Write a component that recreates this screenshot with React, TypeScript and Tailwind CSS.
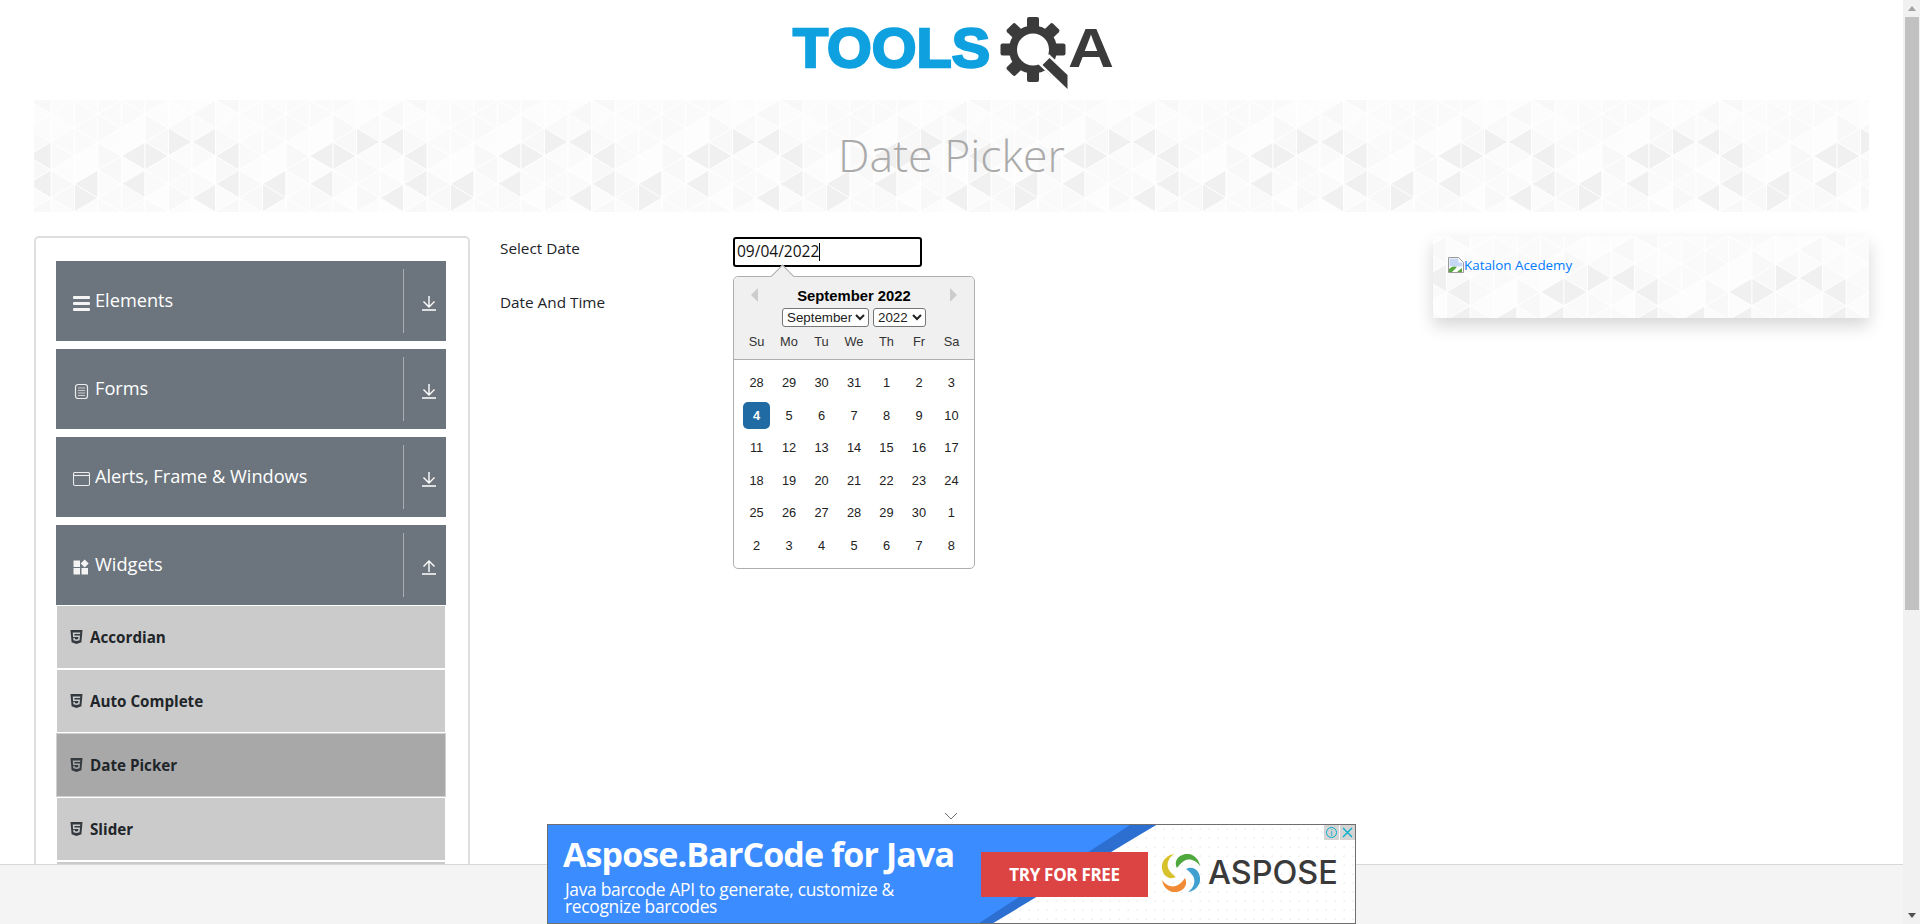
import React from 'react';
import { FaHtml5 } from 'react-icons/fa';

const SANS = 'font-["Open_Sans",sans-serif]';
const ARIAL = 'font-["Liberation_Sans",Arial,sans-serif]';

// triangles that stand out in the banner texture: [column, row, pointing right?]
const DARK: [number, number, boolean][] = [
  [3, 1, false],
  [4, 1, true],
  [7, 1, false],
  [5, 1, true],
  [6, 1, false],
  [1, 2, false],
  [3, 2, false],
  [7, 2, false],
  [1, 3, true],
  [6, 3, false],
];

const SHADES = ['#fcfcfc', '#fafafa', '#fbfbfb', '#f9f9f9', '#fdfdfd', '#fafafa', '#f8f8f8'];

function TrianglePattern({ id, offsetX = 0 }: { id: string; offsetX?: number }) {
  const w = 23.5;
  const h = 28;
  const tris = [];
  for (let k = 0; k < 8; k++) {
    const v0 = k % 2 === 0 ? 14 : 0;
    const v1 = k % 2 === 0 ? 0 : 14;
    const x0 = 17 + k * w;
    const x1 = x0 + w;
    for (let j = -1; j < 5; j++) {
      const row = ((j % 4) + 4) % 4;
      const rightDark = DARK.some((d) => d[0] === k && d[1] === row && d[2]);
      const leftDark = DARK.some((d) => d[0] === k && d[1] === row && !d[2]);
      const a = SHADES[(k * 5 + row * 3) % SHADES.length];
      const b = SHADES[(k * 3 + row * 6 + 2) % SHADES.length];
      tris.push(
        <polygon
          key={`r${k}-${j}`}
          points={`${x0},${v0 + j * h} ${x0},${v0 + (j + 1) * h} ${x1},${v0 + j * h + 14}`}
          fill={rightDark ? '#f0f0f0' : a}
          stroke="#ffffff"
          strokeWidth="0.8"
        />,
        <polygon
          key={`l${k}-${j}`}
          points={`${x1},${v1 + j * h} ${x1},${v1 + (j + 1) * h} ${x0},${v1 + j * h + 14}`}
          fill={leftDark ? '#f0f0f0' : b}
          stroke="#ffffff"
          strokeWidth="0.8"
        />,
      );
    }
  }
  return (
    <svg className="absolute inset-0 w-full h-full" aria-hidden="true">
      <defs>
        <pattern id={id} x={offsetX} y="0" width="188" height="112" patternUnits="userSpaceOnUse">
          <g>{tris}</g>
          <g transform="translate(-188 0)">{tris}</g>
        </pattern>
      </defs>
      <rect width="100%" height="100%" fill={`url(#${id})`} />
    </svg>
  );
}

function Logo() {
  const teeth = [0, 45, 90, 135, 180, 225, 270, 315];
  return (
    <svg width="330" height="80" viewBox="0 0 330 80" aria-label="Tools QA logo">
      <text
        x="6"
        y="57"
        fontFamily="'Liberation Sans', Arial, sans-serif"
        fontWeight="700"
        fontSize="56"
        textLength="197"
        lengthAdjust="spacingAndGlyphs"
        fill="#0fa1df"
        stroke="#0fa1df"
        strokeWidth="2.4"
      >
        TOOLS
      </text>
      {/* gear centred at 246,39.5 */}
      <g fill="#3b3b3b">
        {teeth.map((t) => (
          <rect key={t} x="240" y="7" width="12" height="12" rx="2" transform={`rotate(${t} 246 39.5)`} />
        ))}
      </g>
      <circle cx="246" cy="39.5" r="20" fill="none" stroke="#3b3b3b" strokeWidth="8" />
      <polygon points="251,54 262,44 285,66 285,80 279,80" fill="#ffffff" />
      <polygon points="255.5,55 262.5,48 280.5,65 280.5,79" fill="#3b3b3b" />
      <text
        x="281"
        y="57"
        fontFamily="'Liberation Sans', Arial, sans-serif"
        fontWeight="700"
        fontSize="56"
        textLength="46"
        lengthAdjust="spacingAndGlyphs"
        fill="#3b3b3b"
      >
        A
      </text>
    </svg>
  );
}

function ArrowIcon({ up }: { up?: boolean }) {
  return (
    <svg width="16" height="16" viewBox="0 0 16 16" fill="none" stroke="#ffffff" strokeWidth="1.4">
      {up ? (
        <path d="M8 13V2M2.5 7.5 8 2l5.5 5.5M1 15h14" />
      ) : (
        <path d="M8 1v11M2.5 6.5 8 12l5.5-5.5M1 15h14" />
      )}
    </svg>
  );
}

function BarsIcon() {
  return (
    <svg width="17" height="15" viewBox="0 0 17 15" fill="#f4f4f4">
      <rect y="0" width="17" height="3" rx="1" />
      <rect y="6" width="17" height="3" rx="1" />
      <rect y="12" width="17" height="3" rx="1" />
    </svg>
  );
}

function FormIcon() {
  return (
    <svg width="17" height="17" viewBox="0 0 17 17" fill="none" stroke="#ececec" strokeWidth="1.2">
      <rect x="2.5" y="1.5" width="12" height="14" rx="2.5" />
      <path d="M5 5h7M5 7.5h7M5 10h7M5 12.5h7" stroke="#c8cacc" />
    </svg>
  );
}

function WindowIcon() {
  return (
    <svg width="17" height="16" viewBox="0 0 17 16" fill="none" stroke="#ececec" strokeWidth="1.1">
      <rect x="0.5" y="1.5" width="16" height="13" rx="1.5" />
      <path d="M1 4.5h15" />
    </svg>
  );
}

function WidgetIcon() {
  return (
    <svg width="16" height="16" viewBox="0 0 16 16" fill="#f4f4f4">
      <rect x="0.5" y="1.5" width="6.5" height="6.5" />
      <rect x="0.5" y="9" width="6.5" height="6.5" />
      <rect x="8.5" y="9" width="6.5" height="6.5" />
      <polygon points="11.7,0.5 15.7,4.5 11.7,8.5 7.7,4.5" />
    </svg>
  );
}

function BrokenImageIcon() {
  return (
    <svg width="16" height="16" viewBox="0 0 16 16" className="shrink-0">
      <path d="M0.5 0.5h10l5 5v10h-15z" fill="#ffffff" stroke="#9a9a9a" />
      <path d="M1.5 1.5h9v4h4v4H1.5z" fill="#c5d7f2" />
      <path d="M1 15v-3c3-3 6-3 8-2l-5 5z" fill="#57a63c" />
      <path d="M9 15l5-4v4z" fill="#57a63c" />
    </svg>
  );
}

function SwirlLogo() {
  const blades = ['#4fa83d', '#3fa0d0', '#f08a34', '#d8c22c'];
  return (
    <svg width="40" height="40" viewBox="-20 -20 40 40" aria-hidden="true">
      {blades.map((c, i) => (
        <path
          key={c}
          d="M-4-5C-8-13-1-20 8-19 14-18 18-13 19-7 15-13 8-15 3-12 0-10-2-8-4-5z"
          fill={c}
          transform={`rotate(${i * 90})`}
        />
      ))}
    </svg>
  );
}

const GROUPS = [
  { label: 'Elements', icon: <BarsIcon /> },
  { label: 'Forms', icon: <FormIcon /> },
  { label: 'Alerts, Frame & Windows', icon: <WindowIcon /> },
  { label: 'Widgets', icon: <WidgetIcon />, open: true },
];

const WIDGETS = ['Accordian', 'Auto Complete', 'Date Picker', 'Slider', ''];

function Sidebar() {
  return (
    <div className="w-[436px] shrink-0 border-2 border-[#dfdfdf] rounded-[5px] pl-[20px] pr-[22px] pt-[23px] bg-white">
      {GROUPS.map((g) => (
        <div key={g.label} className={g.open ? '' : 'mb-[8px]'}>
          <div className="h-[80px] bg-[#6c757d] flex items-center text-white">
            <div className="w-[39px] pl-[17px] flex justify-start shrink-0 translate-y-[2px]">{g.icon}</div>
            <div className={`flex-1 text-[18.2px] leading-none -translate-y-[1px] ${SANS}`}>{g.label}</div>
            <div className="h-[64px] w-px bg-[#a9adb1]" />
            <div className="w-[42px] flex justify-center pl-[7px] translate-y-[2px]">
              <ArrowIcon up={g.open} />
            </div>
          </div>
        </div>
      ))}
      <ul className="pt-px">
        {WIDGETS.map((w, i) => (
          <li
            key={i}
            className={`h-[62px] mb-[2px] mx-px flex items-center pl-[13px] text-[#212529] ${
              w === 'Date Picker' ? 'bg-[#a8a8a8] outline outline-1 outline-[#d0d0d0]' : 'bg-[#cbcbcb]'
            }`}
          >
            {w && <FaHtml5 className="text-[#343a40] text-[16px] w-[13px] mr-[7px] shrink-0" />}
            <span className={`text-[15.2px] font-bold ${SANS}`}>{w}</span>
          </li>
        ))}
      </ul>
    </div>
  );
}

const DAY_NAMES = ['Su', 'Mo', 'Tu', 'We', 'Th', 'Fr', 'Sa'];
const WEEKS = [
  [28, 29, 30, 31, 1, 2, 3],
  [4, 5, 6, 7, 8, 9, 10],
  [11, 12, 13, 14, 15, 16, 17],
  [18, 19, 20, 21, 22, 23, 24],
  [25, 26, 27, 28, 29, 30, 1],
  [2, 3, 4, 5, 6, 7, 8],
];

function Calendar() {
  return (
    <div className={`absolute left-0 top-[39px] w-[242px] h-[293px] border border-[#aeaeae] rounded-[5px] bg-white ${ARIAL}`}>
      {/* little pointer */}
      <div className="absolute left-[40px] -top-[9px] w-[17px] h-[17px] rotate-45 bg-[#f0f0f0] border-l border-t border-[#aeaeae]" />
      <div className="relative h-[83px] bg-[#f0f0f0] border-b border-[#aeaeae] rounded-t-[5px]">
        <div className="absolute left-[17px] top-[11px] w-0 h-0 border-y-[7px] border-y-transparent border-r-[7px] border-r-[#ccc]" />
        <div className="absolute right-[17px] top-[11px] w-0 h-0 border-y-[7px] border-y-transparent border-l-[7px] border-l-[#ccc]" />
        <div className="pt-[11px] text-center text-[14.8px] leading-[17px] font-bold text-black">September 2022</div>
        <div className="flex justify-center gap-[4px] mt-[3px]">
          <select
            defaultValue="September"
            className="w-[87px] h-[19px] text-[13.33px] leading-none border border-[#767676] rounded-[3px] bg-white text-[#222] p-0 appearance-auto"
          >
            <option>September</option>
          </select>
          <select
            defaultValue="2022"
            className="w-[53px] h-[19px] text-[13.33px] leading-none border border-[#767676] rounded-[3px] bg-white text-[#222] p-0 appearance-auto"
          >
            <option>2022</option>
          </select>
        </div>
        <div className="flex justify-center mt-[6px]">
          {DAY_NAMES.map((d) => (
            <div key={d} className="w-[32.5px] text-center text-[12.8px] leading-[18px] text-[#333]">
              {d}
            </div>
          ))}
        </div>
      </div>
      <div className="pt-[6.5px] flex flex-col items-center">
        {WEEKS.map((week, i) => (
          <div key={i} className="flex h-[32.5px] items-center">
            {week.map((d, j) => (
              <div
                key={j}
                className={`w-[27.2px] mx-[2.65px] h-[27.2px] flex items-center justify-center text-[12.8px] rounded-[5px] ${
                  i === 1 && j === 0 ? 'bg-[#216ba5] text-white font-bold' : 'text-[#222]'
                }`}
              >
                {d}
              </div>
            ))}
          </div>
        ))}
      </div>
    </div>
  );
}

function DateForm() {
  return (
    <div className={`flex-1 pl-[30px] pt-[1px] text-[#212529] ${SANS}`}>
      <div className="flex h-[30px]">
        <div className="w-[233px] text-[15.3px] leading-[22px]">Select Date</div>
        <div className="relative w-[189px]">
          <div className="h-[30px] border-2 border-black rounded-[3px] flex items-center pl-[2px] text-[15.5px] text-[#111]">
            <span>09/04/2022</span>
            <span className="w-px h-[18px] bg-black" />
          </div>
          <Calendar />
        </div>
      </div>
      <div className="mt-[24px] text-[15.3px] leading-[22px]">Date And Time</div>
    </div>
  );
}

function AdCard() {
  return (
    <div className="relative w-[436px] h-[82px] shrink-0 shadow-[0_8px_16px_rgba(0,0,0,0.16)] overflow-hidden bg-[#fbfbfb]">
      <TrianglePattern id="ad-tri" offsetX={20} />
      <a href="#" className={`relative flex items-center pt-[19px] pl-[15px] text-[13.4px] text-[#007bff] ${SANS}`}>
        <BrokenImageIcon />
        <span>Katalon Acedemy</span>
      </a>
    </div>
  );
}

function BottomAd() {
  return (
    <div className="absolute left-[547px] top-[824px] w-[809px] h-[100px] border border-[#6e6e6e] bg-white bg-[radial-gradient(#f1f1f1_1px,transparent_1px)] bg-[length:9px_9px] overflow-hidden">
      {/* diagonal blue part */}
      <svg className="absolute inset-0" width="809" height="100" aria-hidden="true">
        <polygon points="0,0 608,0 428,100 0,100" fill="#3b8cff" />
        <polygon points="582,0 608,0 442,100 428,100" fill="#2c6fd1" />
      </svg>
      <div className="relative pl-[15px] pt-[11px] text-white font-['Open_Sans',sans-serif]">
        <div className="text-[34px] leading-[36px] font-bold tracking-[-0.9px]">Aspose.BarCode for Java</div>
        <div className="mt-[9px] pl-[2px] text-[17.4px] leading-[17px] font-normal tracking-[-0.3px]">
          Java barcode API to generate, customize &amp;
          <br />
          recognize barcodes
        </div>
      </div>
      <div className={`absolute left-[433px] top-[27px] w-[167px] h-[45px] bg-[#dc4444] flex items-center justify-center text-white text-[17px] font-bold tracking-[-0.3px] ${SANS}`}>
        TRY FOR FREE
      </div>
      <div className="absolute left-[613px] top-[28px] flex items-center gap-[7px]">
        <SwirlLogo />
        <span className="text-[32.4px] leading-none text-[#3a3a3a] font-medium font-['Inter',sans-serif]">ASPOSE</span>
      </div>
      <div className="absolute right-0 top-0 flex h-[15px] gap-px">
        <div className="w-[15px] bg-[#d4d4d4] flex items-center justify-center">
          <span className="w-[11px] h-[11px] rounded-full border border-[#00aecd] text-[#00aecd] text-[9px] leading-[9px] text-center">i</span>
        </div>
        <div className="w-[15px] bg-[#d4d4d4] flex items-center justify-center">
          <svg width="11" height="11" viewBox="0 0 11 11" stroke="#00aecd" strokeWidth="1.3">
            <path d="M1 1l9 9M10 1l-9 9" />
          </svg>
        </div>
      </div>
    </div>
  );
}

function ScrollBar() {
  return (
    <div className="w-[17px] shrink-0 bg-[#f1f1f1] flex flex-col items-center">
      <div className="h-[17px] flex items-center justify-center">
        <div className="w-0 h-0 border-x-[4px] border-x-transparent border-b-[5px] border-b-[#a3a3a3]" />
      </div>
      <div className="w-[14px] h-[593px] bg-[#c1c1c1]" />
      <div className="flex-1" />
      <div className="h-[17px] flex items-center justify-center">
        <div className="w-0 h-0 border-x-[4px] border-x-transparent border-t-[5px] border-t-[#505050]" />
      </div>
    </div>
  );
}

export default function App() {
  return (
    <div className="relative w-[1920px] h-[924px] overflow-hidden flex bg-white">
      <div className="flex-1 min-w-0 flex flex-col">
        <div className="flex-1 min-h-0 overflow-hidden">
          <header className="h-[100px] flex justify-center pt-[10px]">
            <Logo />
          </header>
          <div className="px-[34px]">
            <div className="relative h-[112px] bg-[#fafafa] overflow-hidden flex items-center justify-center">
              <TrianglePattern id="banner-tri" />
              <h1 className={`relative -translate-y-px text-[44.6px] font-light text-[#aaaaaa] ${SANS}`}>Date Picker</h1>
            </div>
            <div className="mt-[24px] flex">
              <Sidebar />
              <DateForm />
              <AdCard />
            </div>
          </div>
        </div>
        <footer className="h-[60px] shrink-0 bg-[#f4f4f4] border-t border-[#d8d8d8]" />
      </div>
      <ScrollBar />

      <svg className="absolute left-[944px] top-[812px]" width="14" height="8" viewBox="0 0 14 8" fill="none" stroke="#6e6e6e">
        <path d="M1 1l6 6 6-6" />
      </svg>
      <BottomAd />
    </div>
  );
}
